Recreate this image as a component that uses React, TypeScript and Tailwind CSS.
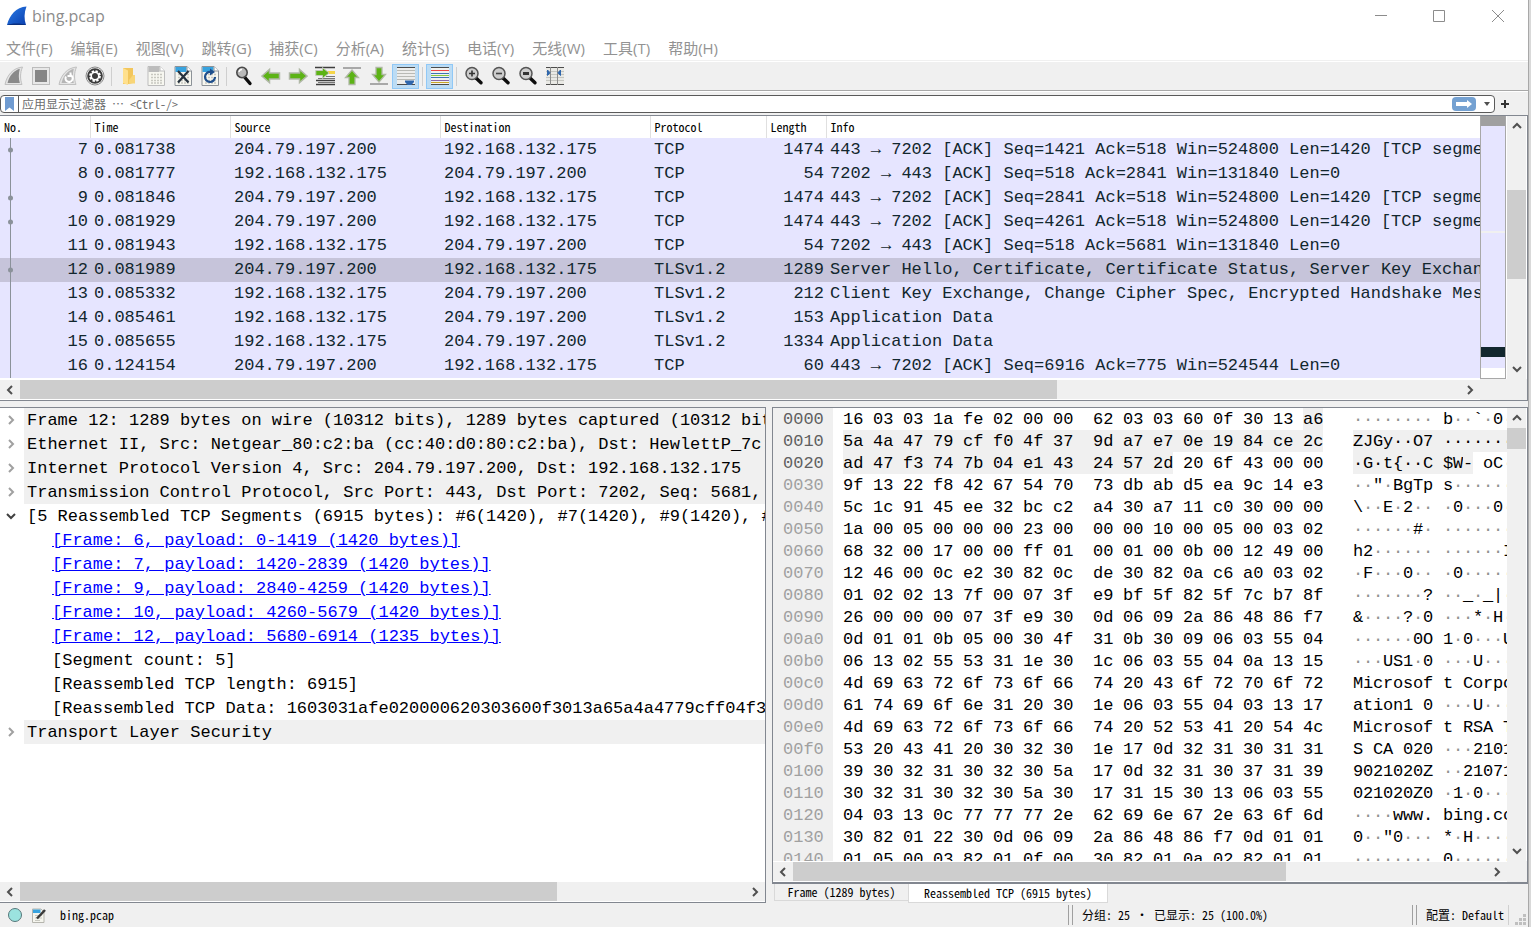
import { useState } from "react";
import type { ReactNode } from "react";
import clsx from "clsx";

type Packet = {
  no: number;
  time: string;
  source: string;
  destination: string;
  protocol: string;
  length: number;
  info: string;
  related?: boolean;
};

const SERVER = "204.79.197.200";
const CLIENT = "192.168.132.175";

const packets: Packet[] = [
  { no: 7, time: "0.081738", source: SERVER, destination: CLIENT, protocol: "TCP", length: 1474, info: "443 → 7202 [ACK] Seq=1421 Ack=518 Win=524800 Len=1420 [TCP segmen", related: true },
  { no: 8, time: "0.081777", source: CLIENT, destination: SERVER, protocol: "TCP", length: 54, info: "7202 → 443 [ACK] Seq=518 Ack=2841 Win=131840 Len=0" },
  { no: 9, time: "0.081846", source: SERVER, destination: CLIENT, protocol: "TCP", length: 1474, info: "443 → 7202 [ACK] Seq=2841 Ack=518 Win=524800 Len=1420 [TCP segmen", related: true },
  { no: 10, time: "0.081929", source: SERVER, destination: CLIENT, protocol: "TCP", length: 1474, info: "443 → 7202 [ACK] Seq=4261 Ack=518 Win=524800 Len=1420 [TCP segmen", related: true },
  { no: 11, time: "0.081943", source: CLIENT, destination: SERVER, protocol: "TCP", length: 54, info: "7202 → 443 [ACK] Seq=518 Ack=5681 Win=131840 Len=0" },
  { no: 12, time: "0.081989", source: SERVER, destination: CLIENT, protocol: "TLSv1.2", length: 1289, info: "Server Hello, Certificate, Certificate Status, Server Key Exchang", related: true },
  { no: 13, time: "0.085332", source: CLIENT, destination: SERVER, protocol: "TLSv1.2", length: 212, info: "Client Key Exchange, Change Cipher Spec, Encrypted Handshake Mess" },
  { no: 14, time: "0.085461", source: CLIENT, destination: SERVER, protocol: "TLSv1.2", length: 153, info: "Application Data" },
  { no: 15, time: "0.085655", source: CLIENT, destination: SERVER, protocol: "TLSv1.2", length: 1334, info: "Application Data" },
  { no: 16, time: "0.124154", source: SERVER, destination: CLIENT, protocol: "TCP", length: 60, info: "443 → 7202 [ACK] Seq=6916 Ack=775 Win=524544 Len=0" },
];

type TreeRow = { text: string; kind: "closed" | "open" | "link" | "leaf" };

const treeRows: TreeRow[] = [
  { kind: "closed", text: "Frame 12: 1289 bytes on wire (10312 bits), 1289 bytes captured (10312 bits" },
  { kind: "closed", text: "Ethernet II, Src: Netgear_80:c2:ba (cc:40:d0:80:c2:ba), Dst: HewlettP_7c:5" },
  { kind: "closed", text: "Internet Protocol Version 4, Src: 204.79.197.200, Dst: 192.168.132.175" },
  { kind: "closed", text: "Transmission Control Protocol, Src Port: 443, Dst Port: 7202, Seq: 5681, A" },
  { kind: "open", text: "[5 Reassembled TCP Segments (6915 bytes): #6(1420), #7(1420), #9(1420), #1" },
  { kind: "link", text: "[Frame: 6, payload: 0-1419 (1420 bytes)]" },
  { kind: "link", text: "[Frame: 7, payload: 1420-2839 (1420 bytes)]" },
  { kind: "link", text: "[Frame: 9, payload: 2840-4259 (1420 bytes)]" },
  { kind: "link", text: "[Frame: 10, payload: 4260-5679 (1420 bytes)]" },
  { kind: "link", text: "[Frame: 12, payload: 5680-6914 (1235 bytes)]" },
  { kind: "leaf", text: "[Segment count: 5]" },
  { kind: "leaf", text: "[Reassembled TCP length: 6915]" },
  { kind: "leaf", text: "[Reassembled TCP Data: 1603031afe020000620303600f3013a65a4a4779cff04f379" },
  { kind: "closed", text: "Transport Layer Security" },
];

const hexLines = [
  "16 03 03 1a fe 02 00 00 62 03 03 60 0f 30 13 a6",
  "5a 4a 47 79 cf f0 4f 37 9d a7 e7 0e 19 84 ce 2c",
  "ad 47 f3 74 7b 04 e1 43 24 57 2d 20 6f 43 00 00",
  "9f 13 22 f8 42 67 54 70 73 db ab d5 ea 9c 14 e3",
  "5c 1c 91 45 ee 32 bc c2 a4 30 a7 11 c0 30 00 00",
  "1a 00 05 00 00 00 23 00 00 00 10 00 05 00 03 02",
  "68 32 00 17 00 00 ff 01 00 01 00 0b 00 12 49 00",
  "12 46 00 0c e2 30 82 0c de 30 82 0a c6 a0 03 02",
  "01 02 02 13 7f 00 07 3f e9 bf 5f 82 5f 7c b7 8f",
  "26 00 00 00 07 3f e9 30 0d 06 09 2a 86 48 86 f7",
  "0d 01 01 0b 05 00 30 4f 31 0b 30 09 06 03 55 04",
  "06 13 02 55 53 31 1e 30 1c 06 03 55 04 0a 13 15",
  "4d 69 63 72 6f 73 6f 66 74 20 43 6f 72 70 6f 72",
  "61 74 69 6f 6e 31 20 30 1e 06 03 55 04 03 13 17",
  "4d 69 63 72 6f 73 6f 66 74 20 52 53 41 20 54 4c",
  "53 20 43 41 20 30 32 30 1e 17 0d 32 31 30 31 31",
  "39 30 32 31 30 32 30 5a 17 0d 32 31 30 37 31 39",
  "30 32 31 30 32 30 5a 30 17 31 15 30 13 06 03 55",
  "04 03 13 0c 77 77 77 2e 62 69 6e 67 2e 63 6f 6d",
  "30 82 01 22 30 0d 06 09 2a 86 48 86 f7 0d 01 01",
  "01 05 00 03 82 01 0f 00 30 82 01 0a 02 82 01 01",
];

// byte range of the selected field
const SEL_START = 15;
const SEL_END = 42;

const menus = ["文件(F)", "编辑(E)", "视图(V)", "跳转(G)", "捕获(C)", "分析(A)", "统计(S)", "电话(Y)", "无线(W)", "工具(T)", "帮助(H)"];

// packet data and the small labels of the interface
const mono = "font-['Liberation_Mono',monospace] text-[17px]";
const ui = "font-['Noto_Sans_Mono_CJK_SC','Noto_Sans_CJK_SC',monospace] text-xs";

/* ---------- toolbar icons ---------- */

const Icon = ({ children }: { children: ReactNode }) => (
  <svg width="20" height="20" viewBox="0 0 20 20" fill="none" aria-hidden="true">
    {children}
  </svg>
);

const FinIcon = ({ restart }: { restart?: boolean }) => (
  <Icon>
    <path d="M1 18.500C3 9 9 2 18.500 1C16 7 16 13 18 18.500Z" fill="#e4e4e4" stroke="#c0c0c0" />
    <path d="M3.500 17C5.500 9.500 10 4.500 15.800 2.800C14.500 8 14.500 12.500 15.800 17Z" fill={restart ? "#b5b5b5" : "#8a8a8a"} />
    {restart && (
      <path d="M12.800 9.200A3.600 3.600 0 1 1 8 10.500M12.500 6.500V10H9.500" stroke="#fff" strokeWidth="2" />
    )}
  </Icon>
);

const StopIcon = () => (
  <Icon>
    <rect x="1.500" y="1.500" width="17" height="17" fill="#e8e8e8" stroke="#bcbcbc" />
    <rect x="4" y="4" width="12" height="12" fill="#868686" />
  </Icon>
);

const OptionsIcon = () => (
  <Icon>
    <circle cx="10" cy="10" r="9" fill="#f4f4f4" stroke="#8a8a8a" />
    <circle cx="10" cy="10" r="7.800" fill="#3c3c3c" />
    <circle cx="10" cy="10" r="4.600" stroke="#fff" strokeWidth="2.600" strokeDasharray="2.200 1.400" />
    <circle cx="10" cy="10" r="3.800" stroke="#fff" strokeWidth="1.600" />
    <circle cx="10" cy="10" r="1.600" fill="#3c3c3c" />
  </Icon>
);

const FolderIcon = () => (
  <Icon>
    <path d="M4 2H14V17L10 18H4Z" fill="#f2c65c" />
    <path d="M4 2L9 4.500V19L4 17Z" fill="#ffe08d" />
    <path d="M14 9H16V17.500H10V14Z" fill="#f8d577" />
  </Icon>
);

const FileIcon = ({ kind }: { kind: "save" | "close" | "reload" }) => {
  const gray = kind === "save";
  return (
    <Icon>
      <path d="M2 .500H14L18.500 5V19.500H2Z" fill="#f7f7f0" stroke={gray ? "#bdbdbd" : "#8c9298"} />
      <path d="M2.500 1H13.500V6H2.500Z" fill={gray ? "#bcbcbc" : "#38a3df"} />
      <path d="M14 .500V5H18.500" fill="#fff" stroke={gray ? "#bdbdbd" : "#8c9298"} />
      <path d="M5 8.500H16M5 11.500H16M5 14.500H16M5 17H16" stroke="#c8c8c0" strokeWidth="1.500" strokeDasharray="2 1" />
      {kind === "close" && <path d="M5 5L15.500 16.500M15.500 5L5 16.500" stroke="#25323e" strokeWidth="2.200" />}
      {kind === "reload" && (
        <>
          <path d="M15 11A5 5 0 1 1 10.500 6" stroke="#1f4f8c" strokeWidth="2.200" />
          <path d="M10 2.500L15 6L10 9.500Z" fill="#1f4f8c" />
        </>
      )}
    </Icon>
  );
};

const FindIcon = () => (
  <Icon>
    <path d="M10.500 11L16 17.500" stroke="#0d0d0d" strokeWidth="3.400" strokeLinecap="round" />
    <circle cx="8" cy="6.500" r="5.200" fill="#b9b9b9" stroke="#4a4a4a" strokeWidth="1.600" />
    <path d="M5 6A3 3 0 0 1 8 3.500" stroke="#fff" strokeWidth="1.300" />
  </Icon>
);

const ArrowIcon = ({ right }: { right?: boolean }) => (
  <Icon>
    <path
      d={right ? "M19 10L11.500 3.500V7H1.500V13H11.500V16.500Z" : "M1 10L8.500 3.500V7H18.500V13H8.500V16.500Z"}
      fill="#5cb315"
      stroke="#b0b8a6"
      strokeWidth="1.500"
    />
  </Icon>
);

const GotoIcon = () => (
  <Icon>
    <path d="M0 1.500H20M1 14.500H20M1 18.500H20" stroke="#3d3d3d" strokeWidth="1.600" />
    <path d="M12 6.500H20" stroke="#f5d548" strokeWidth="3" />
    <path d="M11 10.500H20M3 12.500H20M3 16.500H20" stroke="#777" />
    <path d="M14 7L7.500 1.500V4.500H.800V9.500H7.500V12.500Z" fill="#5cb315" stroke="#c3c8bd" />
  </Icon>
);

const EdgeIcon = ({ down }: { down?: boolean }) => (
  <Icon>
    <path d={down ? "M1 18H19" : "M1 2H19"} stroke="#a8a8a8" strokeWidth="2" />
    <path
      d={down ? "M10 16L16.500 8.500H13V1.500H7V8.500H3.500Z" : "M10 4L16.500 11.500H13V18.500H7V11.500H3.500Z"}
      fill="#5cb315"
      stroke="#b0b8a6"
      strokeWidth="1.300"
    />
  </Icon>
);

const AutoScrollIcon = () => (
  <Icon>
    <rect x="1" y="1" width="18" height="18" fill="#ededeb" />
    <path d="M1 1.500H19M1 18.500H19" stroke="#4c4c4c" />
    <path d="M1 4.500H19M1 7.500H19M1 10.500H19M1 13.500H19" stroke="#b9bab5" />
    <path d="M9 14.500H18V16L15.500 19H11.500L9 16Z" fill="#2f66ac" />
  </Icon>
);

const ColorizeIcon = () => (
  <Icon>
    <rect x="1" y="1" width="18" height="18" fill="#f1f1ef" />
    <path d="M1 1.500H19M1 18.500H19" stroke="#4c4c4c" />
    <path d="M1 4.500H19" stroke="#ef4444" />
    <path d="M1 7.500H19" stroke="#3d72b4" />
    <path d="M1 9.500H19" stroke="#87c940" />
    <path d="M1 11.500H19" stroke="#3d72b4" />
    <path d="M1 14.500H19" stroke="#8a66a5" />
    <path d="M1 16.500H19" stroke="#c9a526" />
  </Icon>
);

const ZoomIcon = ({ kind }: { kind: "in" | "out" | "reset" }) => (
  <Icon>
    <path d="M12 12L17 16.800" stroke="#0d0d0d" strokeWidth="3.400" strokeLinecap="round" />
    <circle cx="8" cy="7.500" r="6" fill="#cdcdcd" stroke="#555" strokeWidth="1.500" />
    {kind === "in" && <path d="M5 7.500H11M8 4.500V10.500" stroke="#333" strokeWidth="1.600" />}
    {kind === "out" && <path d="M5 7.500H11" stroke="#444" strokeWidth="1.600" />}
    {kind === "reset" && <path d="M5 7.500H11" stroke="#333" strokeWidth="3" />}
  </Icon>
);

const ResizeIcon = () => (
  <Icon>
    <rect x="1" y="1" width="18" height="18" fill="#e9e9e5" />
    <path d="M1 1.500H19M1 18.500H19" stroke="#4c4c4c" />
    <path d="M1 5.500H19M1 8.500H19M1 11.500H19M1 14.500H19" stroke="#c5c6c1" />
    <path d="M5.500 1V19M12.500 1V19" stroke="#8c8c8c" />
    <path d="M2.500 4V9.500L5 6.800ZM15.500 4V9.500L13 6.800Z" fill="#2f66ac" stroke="#2f66ac" />
  </Icon>
);

const toolGroups: { label: string; icon: ReactNode; checked?: boolean }[][] = [
  [
    { label: "Start", icon: <FinIcon /> },
    { label: "Stop", icon: <StopIcon /> },
    { label: "Restart", icon: <FinIcon restart /> },
    { label: "Options", icon: <OptionsIcon /> },
  ],
  [
    { label: "Open", icon: <FolderIcon /> },
    { label: "Save", icon: <FileIcon kind="save" /> },
    { label: "Close file", icon: <FileIcon kind="close" /> },
    { label: "Reload", icon: <FileIcon kind="reload" /> },
  ],
  [
    { label: "Find", icon: <FindIcon /> },
    { label: "Previous", icon: <ArrowIcon /> },
    { label: "Next", icon: <ArrowIcon right /> },
    { label: "Go to packet", icon: <GotoIcon /> },
    { label: "First", icon: <EdgeIcon /> },
    { label: "Last", icon: <EdgeIcon down /> },
    { label: "Auto scroll", icon: <AutoScrollIcon />, checked: true },
  ],
  [{ label: "Colorize", icon: <ColorizeIcon />, checked: true }],
  [
    { label: "Zoom in", icon: <ZoomIcon kind="in" /> },
    { label: "Zoom out", icon: <ZoomIcon kind="out" /> },
    { label: "Normal size", icon: <ZoomIcon kind="reset" /> },
    { label: "Resize columns", icon: <ResizeIcon /> },
  ],
];

/* ---------- scroll bars ---------- */

const chevrons = {
  left: "M7 1L3 5L7 9",
  right: "M3 1L7 5L3 9",
  up: "M1 7L5 3L9 7",
  down: "M1 3L5 7L9 3",
};

const Chevron = ({ dir, color = "#505050" }: { dir: keyof typeof chevrons; color?: string }) => (
  <svg width="10" height="10" viewBox="0 0 10 10" fill="none" stroke={color} strokeWidth="2" aria-hidden="true">
    <path d={chevrons[dir]} />
  </svg>
);

const HScroll = ({ size }: { size: number }) => (
  <div className="flex h-[21px] shrink-0 border-y border-white bg-[#f0f0f0]">
    <button aria-label="Scroll left" className="flex w-5 items-center justify-center">
      <Chevron dir="left" />
    </button>
    <div className="flex-1">
      <div className="h-full bg-[#cdcdcd]" style={{ width: `${size}%` }} />
    </div>
    <button aria-label="Scroll right" className="flex w-5 items-center justify-center">
      <Chevron dir="right" />
    </button>
  </div>
);

const VScroll = ({ start, size }: { start: number; size: number }) => (
  <div className="flex w-5 shrink-0 flex-col border-r border-white bg-[#f0f0f0]">
    <button aria-label="Scroll up" className="flex h-5 items-center justify-center">
      <Chevron dir="up" />
    </button>
    <div className="flex min-h-0 flex-1 flex-col">
      <div style={{ height: `${start}%` }} />
      <div className="bg-[#cdcdcd]" style={{ height: `${size}%` }} />
    </div>
    <button aria-label="Scroll down" className="flex h-5 items-center justify-center">
      <Chevron dir="down" />
    </button>
  </div>
);

/* ---------- window parts ---------- */

const TitleBar = () => (
  <header className="flex h-8 shrink-0 items-center bg-white pl-[7px] text-[#8c8c8c]">
    <svg width="20" height="20" viewBox="0 0 20 20" aria-hidden="true">
      <defs>
        <linearGradient id="fin" x1="0" y1="0" x2="1" y2="1">
          <stop offset="0" stopColor="#2a7de8" />
          <stop offset="1" stopColor="#0a3fae" />
        </linearGradient>
      </defs>
      <path d="M0 19C2.500 9 9 1 19.500 .500C17 7 17 13 19 19Z" fill="url(#fin)" />
      <path d="M0 19C4 17 15 17 19 19Z" fill="#0a2f7d" />
    </svg>
    <h1 className="ml-[5px] flex-1 font-['Open_Sans',sans-serif] text-base">bing.pcap</h1>
    <div className="flex">
      <button aria-label="Minimize" className="flex h-8 w-[58px] items-center justify-center">
        <svg width="12" height="12" stroke="currentColor"><path d="M0 5.500H12" /></svg>
      </button>
      <button aria-label="Maximize" className="flex h-8 w-[58px] items-center justify-center">
        <svg width="12" height="12" fill="none" stroke="currentColor"><path d="M.500 .500H11.500V11.500H.500Z" /></svg>
      </button>
      <button aria-label="Close" className="flex h-8 w-[60px] items-center justify-center">
        <svg width="12" height="12" stroke="currentColor"><path d="M0 0L12 12M12 0L0 12" /></svg>
      </button>
    </div>
  </header>
);

const MenuBar = () => (
  <nav className="flex h-[29px] shrink-0 items-center gap-[18px] border-b border-[#f0f0f0] bg-white pl-[6px] pt-1 font-['Open_Sans','Noto_Sans_CJK_SC',sans-serif] text-[15px] leading-6 text-[#929292]">
    {menus.map((menu) => (
      <button key={menu} className="whitespace-nowrap">
        {menu}
      </button>
    ))}
  </nav>
);

const ToolBar = () => (
  <div className="mt-px flex h-[29px] shrink-0 items-center border-b border-[#a8a8a8] bg-[#f0f0f0]">
    {toolGroups.map((group, i) => (
      <div key={i} className="flex">
        {i > 0 && <div className="mx-[3px] my-[3px] w-px bg-[#cfcfcf]" />}
        {group.map((tool) => (
          <button
            key={tool.label}
            aria-label={tool.label}
            className={clsx(
              "flex h-[25px] w-[27px] items-center justify-center",
              tool.checked && "border border-[#90c8f6] bg-[#bcdcf4]"
            )}
          >
            {tool.icon}
          </button>
        ))}
      </div>
    ))}
  </div>
);

const FilterBar = () => {
  const [filter, setFilter] = useState("");

  return (
    <div className="flex h-6 shrink-0 items-center border-t border-white bg-[#f0f0f0]">
      <div className="flex h-[18px] flex-1 items-center rounded border border-[#5a5a5a] bg-white">
        <button aria-label="Bookmarks" className="flex h-full w-[18px] items-center justify-center border-r border-[#5a5a5a]">
          <svg width="9" height="14" viewBox="0 0 9 14"><path d="M0 0H9V14L4.500 10.500L0 14Z" fill="#6f9bd1" /></svg>
        </button>
        <input
          aria-label="应用显示过滤器"
          placeholder="应用显示过滤器 … <Ctrl-/>"
          value={filter}
          onChange={(e) => setFilter(e.target.value)}
          className={clsx("h-4 flex-1 px-[3px] text-black outline-none placeholder:text-[#6c6c6c]", ui)}
        />
        <button aria-label="Apply" className="flex h-[14px] w-6 items-center justify-center rounded-sm bg-[#74a1d2]">
          <svg width="16" height="8" viewBox="0 0 16 8"><path d="M0 2H11V0L16 4L11 8V6H0Z" fill="#fff" /></svg>
        </button>
        <button aria-label="Recent filters" className="flex w-[18px] justify-center pl-1">
          <svg width="6" height="4" viewBox="0 0 6 4"><path d="M0 0H6L3 4Z" fill="#505050" /></svg>
        </button>
      </div>
      <button aria-label="Add filter" className="flex w-[33px] pl-[6px]">
        <svg width="8" height="8" stroke="#333" strokeWidth="2"><path d="M0 4H8M4 0V8" /></svg>
      </button>
    </div>
  );
};

const PacketList = () => {
  const [selected, setSelected] = useState(12);

  return (
    <section className="flex h-[286px] shrink-0 flex-col border border-l-0 border-[#828790] bg-white">
      <div className="flex min-h-0 flex-1">
        <div className="min-w-0 flex-1 overflow-hidden">
          <table className="w-full table-fixed border-collapse">
            <colgroup>
              <col className="w-[90px]" />
              <col className="w-[140px]" />
              <col className="w-[210px]" />
              <col className="w-[210px]" />
              <col className="w-[116px]" />
              <col className="w-[60px]" />
              <col />
            </colgroup>
            <thead>
              <tr className={clsx("h-[22px] text-left leading-4", ui)}>
                {["No.", "Time", "Source", "Destination", "Protocol", "Length", "Info"].map((name) => (
                  <th key={name} className="border-r border-[#e0e0e0] px-1 py-0 font-normal last:border-r-0">
                    {name}
                  </th>
                ))}
              </tr>
            </thead>
            <tbody className={clsx("leading-6 text-[#12272e]", mono)}>
              {packets.map((p) => (
                <tr
                  key={p.no}
                  onClick={() => setSelected(p.no)}
                  className={clsx("h-6 whitespace-nowrap", p.no === selected ? "bg-[#c6c4da]" : "bg-[#e6e5ff]")}
                >
                  <td className="p-0">
                    <div className="flex h-6 items-center justify-between pr-0.5">
                      <svg width="20" height="24" aria-hidden="true">
                        <path d="M10.500 0V24" stroke="#8b929a" />
                        {p.related && <circle cx="10.500" cy="12" r="2.500" fill="#8b929a" />}
                      </svg>
                      {p.no}
                    </div>
                  </td>
                  <td className="px-1 py-0">{p.time}</td>
                  <td className="px-1 py-0">{p.source}</td>
                  <td className="px-1 py-0">{p.destination}</td>
                  <td className="px-1 py-0">{p.protocol}</td>
                  <td className="py-0 pr-0.5 text-right">{p.length}</td>
                  <td className="overflow-hidden py-0 pl-1">{p.info}</td>
                </tr>
              ))}
            </tbody>
          </table>
        </div>
        {/* intelligent scroll bar minimap */}
        <div className="mr-px flex w-[26px] shrink-0 flex-col border-x border-b border-[#a8a8a8]">
          <div className="h-[10px] bg-[#a0a0a0]" />
          <div className="h-[105px] bg-[#e6e5ff]" />
          <div className="h-0.5 bg-[#f0f0f0]" />
          <div className="flex-1 bg-[#e6e5ff]" />
          <div className="h-[10px] bg-[#12272e]" />
          <div className="h-[11px] bg-[#e6e5ff]" />
          <div className="h-[10px] bg-white" />
        </div>
        <VScroll start={24} size={40} />
      </div>
      <div className="flex bg-[#f0f0f0]">
        <div className="flex-1">
          <HScroll size={72} />
        </div>
        <div className="w-[47px]" />
      </div>
    </section>
  );
};

const DetailTree = () => (
  <section className="flex w-[calc(50%+2px)] flex-col border border-l-0 border-[#828790] bg-white">
    <ul className={clsx("min-h-0 flex-1 overflow-hidden whitespace-nowrap leading-[26px] text-black", mono)}>
      {treeRows.map((row) => (
        <li key={row.text} className="flex h-6">
          <span className="flex w-6 shrink-0 items-center pl-[6px]">
            {row.kind === "closed" && <Chevron dir="right" color="#a0a0a0" />}
            {row.kind === "open" && <Chevron dir="down" color="#404040" />}
          </span>
          {row.kind === "link" ? (
            <a href="#frame" className="ml-7 text-[#0000ff] underline">
              {row.text}
            </a>
          ) : (
            <span
              className={clsx(
                "min-w-0 flex-1",
                row.kind === "closed" && "bg-[#f0f0f0] pl-[3px]",
                row.kind === "open" && "pl-[3px]",
                row.kind === "leaf" && "pl-7"
              )}
            >
              {row.text}
            </span>
          )}
        </li>
      ))}
    </ul>
    <HScroll size={74} />
  </section>
);

const toAscii = (byte: string) => {
  const code = parseInt(byte, 16);
  return code >= 0x20 && code < 0x7f ? String.fromCharCode(code) : "·";
};

const HexRow = ({ line, row }: { line: string; row: number }) => {
  const bytes = line.split(" ");
  const isSel = (i: number) => row * 16 + i >= SEL_START && row * 16 + i <= SEL_END;
  const hasSel = bytes.some((_, i) => isSel(i));

  return (
    <div className="flex h-[22px] whitespace-pre">
      <span className={clsx("w-[60px] shrink-0 bg-[#f0f0f0] pl-[10px]", hasSel ? "text-[#606060]" : "text-[#a0a0a0]")}>
        {(row * 16).toString(16).padStart(4, "0")}
      </span>
      <span className="ml-[10px] flex shrink-0">
        {bytes.map((byte, i) => (
          <span
            key={i}
            className={clsx(
              i === 15 ? "w-5" : i === 7 ? "w-10" : "w-[30px]",
              isSel(i) && (isSel(i + 1) || i === 15 ? "bg-[#f0f0f0]" : "bg-linear-to-r from-[#f0f0f0] from-66% to-white to-66%")
            )}
          >
            {byte}
          </span>
        ))}
      </span>
      <span className="ml-[30px] flex shrink-0">
        {bytes.map((byte, i) => (
          <span
            key={i}
            className={clsx(
              i === 7 ? "w-5" : "w-[10px]",
              isSel(i) && "bg-[#f0f0f0]",
              !isSel(i) && toAscii(byte) === "·" && "text-[#909090]"
            )}
          >
            {toAscii(byte)}
          </span>
        ))}
      </span>
    </div>
  );
};

const HexView = () => (
  <div className="flex min-w-0 flex-1 flex-col">
    <section className="flex min-h-0 flex-1 flex-col border border-b-2 border-[#828790] bg-white">
      <div className="flex min-h-0 flex-1">
        <div className={clsx("min-w-0 flex-1 overflow-hidden leading-6 text-black", mono)}>
          {hexLines.map((line, row) => (
            <HexRow key={row} line={line} row={row} />
          ))}
        </div>
        <VScroll start={0} size={5} />
      </div>
      <div className="flex bg-[#f0f0f0]">
        <div className="flex-1">
          <HScroll size={71} />
        </div>
        <div className="w-5" />
      </div>
    </section>
    <div className={clsx("flex h-[19px] shrink-0 items-start pl-0.5 leading-4 text-black", ui)}>
      <button className="h-[17px] w-[134px] border-b border-l border-[#d9d9d9]">Frame (1289 bytes)</button>
      <button className="h-[19px] w-[200px] border-x border-b border-[#d9d9d9] bg-white">
        Reassembled TCP (6915 bytes)
      </button>
    </div>
  </div>
);

const StatusSplit = () => <div className="mr-[9px] h-5 w-[5px] shrink-0 border-x border-[#a0a0a0]" />;

const StatusBar = () => (
  <footer className={clsx("flex h-6 shrink-0 items-center text-black", ui)}>
    <div className="flex flex-1 items-center pl-2">
      <svg width="14" height="14" viewBox="0 0 14 14" aria-hidden="true">
        <circle cx="7" cy="7" r="6.500" fill="#9be3df" stroke="#56777a" />
      </svg>
      <svg className="ml-[10px]" width="15" height="15" viewBox="0 0 15 15" aria-hidden="true">
        <path d="M.500 1H9L12 4V14.500H.500Z" fill="#f5f5ee" stroke="#b5b5ae" />
        <path d="M1 1.500H8.500V5H1Z" fill="#38a3df" />
        <path d="M3 7.500H10M3 10H10M3 12.500H8" stroke="#c8c8c0" />
        <path d="M5 10.500L13 2" stroke="#3a3a3a" strokeWidth="2.500" />
      </svg>
      <span className="ml-[13px]">bing.pcap</span>
    </div>
    <div className="flex w-[344px] items-center">
      <StatusSplit />
      <span>分组: 25 · 已显示: 25 (100.0%)</span>
    </div>
    <div className="flex w-[116px] items-center">
      <StatusSplit />
      <span>配置: Default</span>
      <div className="ml-1 h-5 w-px bg-[#d0d0d0]" />
      <svg className="ml-[6px] mt-2" width="11" height="11" fill="#bfbfbf" aria-hidden="true">
        <path d="M8 0h3v3h-3zM4 4h3v3h-3zM8 4h3v3h-3zM0 8h3v3h-3zM4 8h3v3h-3zM8 8h3v3h-3z" />
      </svg>
    </div>
  </footer>
);

const App = () => (
  <div className="flex h-screen overflow-hidden bg-white">
    <main className="flex min-w-0 flex-1 flex-col bg-[#f0f0f0]">
      <div className="flex shrink-0 flex-col bg-white">
        <TitleBar />
        <MenuBar />
        <ToolBar />
      </div>
      <FilterBar />
      <PacketList />
      <div className="mt-[6px] flex min-h-0 flex-1 gap-[6px]">
        <DetailTree />
        <HexView />
      </div>
      <StatusBar />
    </main>
    <div className="w-[3px] shrink-0 border-l border-[#a8a8a8] bg-[#d9d9d9]" />
  </div>
);

export default App;
